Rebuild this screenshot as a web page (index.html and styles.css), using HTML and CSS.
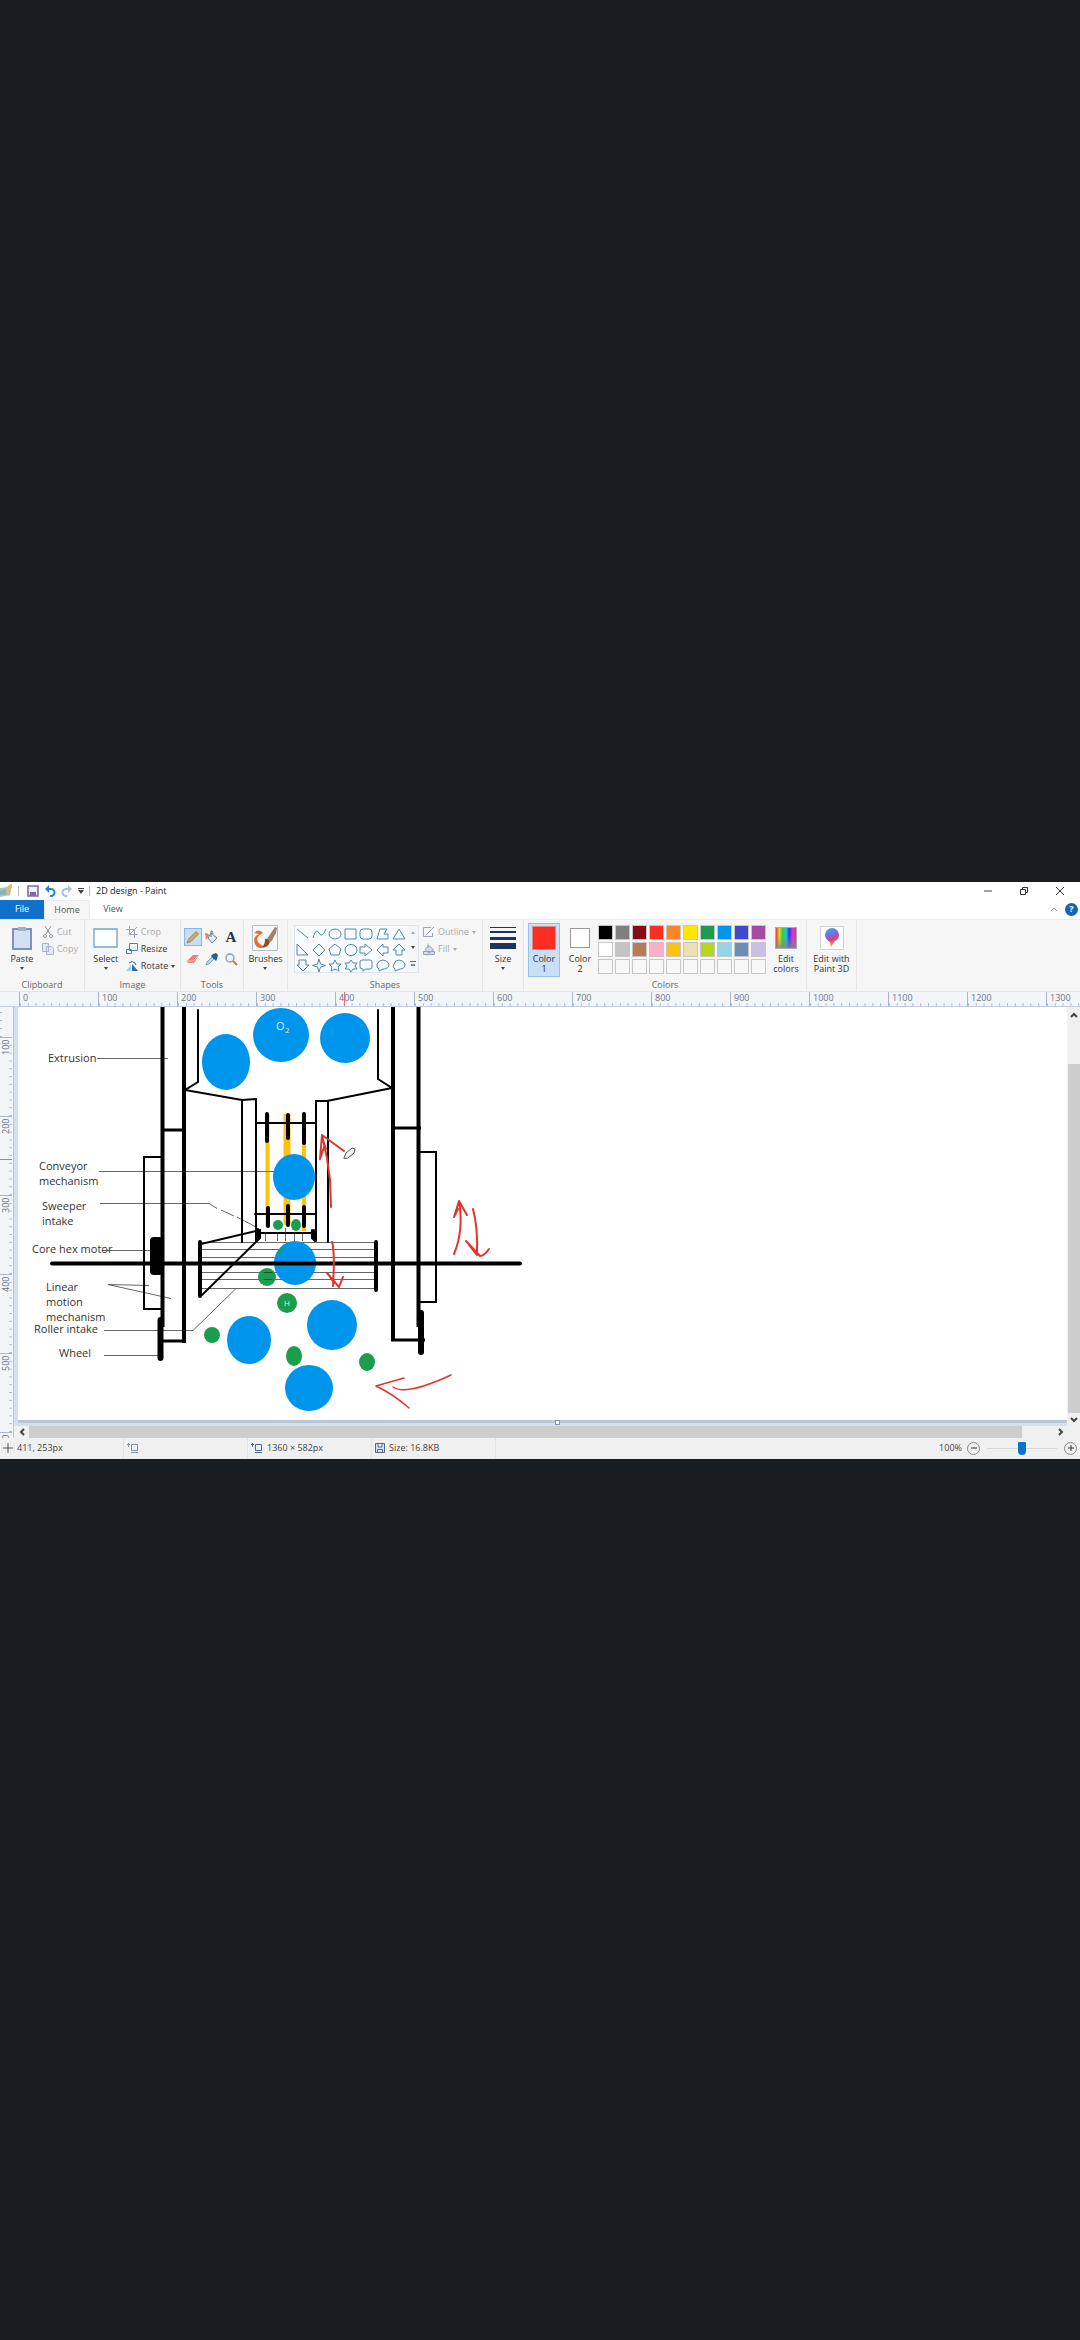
FILE: index.html
```html
<!DOCTYPE html>
<html lang="en">
<head>
<meta charset="utf-8">
<meta name="viewport" content="width=device-width, initial-scale=1">
<title>2D design - Paint</title>
<link rel="stylesheet" href="styles.css">
</head>
<body>
<main class="window">
  <header class="titlebar">
    <svg class="app-icon" width="12" height="14" viewBox="0 0 12 14"><path d="M0 4l7-1 4-3 1 1-2 10-10 2z" fill="#a8c8b4"/><path d="M7 3l4-3 1 1-3 11-3-2z" fill="#e0b878"/><path d="M0 7l6-2v5l-6 1z" fill="#79b7c6"/></svg>
    <span class="sep"></span>
    <button class="plain" aria-label="Save"><svg width="12" height="12" viewBox="0 0 12 12"><path d="M1 1h10v10H1z" fill="#f3eefa" stroke="#7d6aae" stroke-width="1.6"/><path d="M3 7h6v4H3z" fill="#7d6aae"/></svg></button>
    <button class="plain" aria-label="Undo"><svg width="12" height="12" viewBox="0 0 12 12" fill="none"><path d="M3 4h4a3.200 3.200 0 0 1 0 7H6" stroke="#2b83cf" stroke-width="2"/><path d="M1 4l4-4v8z" fill="#2b83cf"/></svg></button>
    <button class="plain" aria-label="Redo"><svg width="12" height="12" viewBox="0 0 12 12" fill="none"><path d="M9 4H5a3.200 3.200 0 0 0 0 7h1" stroke="#a8c0dd" stroke-width="2"/><path d="M11 4L7 0v8z" fill="#a8c0dd"/></svg></button>
    <button class="plain" aria-label="Customize toolbar"><svg width="6" height="6" viewBox="0 0 6 6"><path d="M0 0h6v1H0zM0 2h6L3 6z" fill="#444"/></svg></button>
    <span class="sep"></span>
    <h1 class="title">2D design - Paint</h1>
    <div class="window-buttons">
      <button class="plain" aria-label="Minimize"><svg width="10" height="10" viewBox="0 0 10 10"><path d="M1 5h8" stroke="#444"/></svg></button>
      <button class="plain" aria-label="Restore"><svg width="10" height="10" viewBox="0 0 10 10" fill="none" stroke="#333"><path d="M1.500 3.500h5v5h-5zM3.500 3V1.500h5v5H7"/></svg></button>
      <button class="plain" aria-label="Close"><svg width="10" height="10" viewBox="0 0 10 10" stroke="#333"><path d="M1 1l8 8M9 1L1 9"/></svg></button>
    </div>
  </header>

  <nav class="tabs">
    <button class="tab tab-file">File</button>
    <button class="tab tab-active">Home</button>
    <button class="tab">View</button>
    <div class="tabs-end">
      <button class="plain" aria-label="Collapse ribbon"><svg width="8" height="6" viewBox="0 0 8 6"><path d="M1 5l3-3 3 3" fill="none" stroke="#999"/></svg></button>
      <button class="help">?</button>
    </div>
  </nav>

  <section class="ribbon">
    <div class="group g-clipboard">
      <div class="group-body">
        <button class="big"><span class="glyph"><svg width="20" height="24" viewBox="0 0 20 24"><path d="M1 3h18v20H1z" fill="#d3dff2" stroke="#8292b4" stroke-width="2"/><path d="M6 1h8v4H6z" fill="#a4b0c8"/></svg></span>Paste<i class="caret"></i></button>
        <div class="stack">
          <button class="small off"><svg width="12" height="12" viewBox="0 0 12 12" fill="none" stroke="#8e93a4"><path d="M3 0l5 8M9 0L4 8"/><circle cx="3" cy="10" r="1.500"/><circle cx="9" cy="10" r="1.500"/></svg>Cut</button>
          <button class="small off"><svg width="12" height="12" viewBox="0 0 12 12" fill="#e4e8f4" stroke="#a9b2ce"><path d="M.5.500h6v8h-6zM4.500 3.500h5l2 2v6h-7z"/></svg>Copy</button>
        </div>
      </div>
      <h2>Clipboard</h2>
    </div>

    <div class="group g-image">
      <div class="group-body">
        <button class="big"><span class="glyph"><svg width="25" height="24" viewBox="0 0 25 24"><path d="M1 3h23v18H1z" fill="#fdfeff" stroke="#6fa5c8" stroke-width="1.300"/></svg></span>Select<i class="caret"></i></button>
        <div class="stack">
          <button class="small off"><svg width="12" height="12" viewBox="0 0 12 12" fill="none" stroke="#9c9fb8"><path d="M3.500 0v8.500H12M0 3.500h8.500V12M4 8l7-7"/></svg>Crop</button>
          <button class="small"><svg width="12" height="12" viewBox="0 0 12 12" fill="#eef6fc" stroke="#4388bb"><path d="M3.500.500h8v7h-8zM.5 6.500h5v4h-5z"/></svg>Resize</button>
          <button class="small"><svg width="12" height="12" viewBox="0 0 12 12"><path d="M0 11h5V5z" fill="#a7cde6"/><path d="M6 11h6L6 4z" fill="#286fa8"/><path d="M3 3q3-3 6 0l1 2" fill="none" stroke="#286fa8"/></svg>Rotate<i class="caret"></i></button>
        </div>
      </div>
      <h2>Image</h2>
    </div>

    <div class="group g-tools">
      <div class="group-body">
        <div class="tool-grid">
          <button class="tool on" aria-label="Pencil"><svg width="14" height="14" viewBox="0 0 14 14"><path d="M1 13l1.500-4L10 1.500l2.500 2.500L5 11.500z" fill="#d9a94f" stroke="#80765c" stroke-width=".7"/></svg></button>
          <button class="tool" aria-label="Fill"><svg width="14" height="14" viewBox="0 0 14 14"><path d="M6 3l6 5-5 5-4-5z" fill="#dce9f3" stroke="#64839c"/><path d="M6 7V1q2-1 2 3" fill="none" stroke="#64839c"/><path d="M0 3q4 0 4 3L1 10z" fill="#e5835e"/></svg></button>
          <button class="tool text-tool" aria-label="Text">A</button>
          <button class="tool" aria-label="Eraser"><svg width="14" height="14" viewBox="0 0 14 14"><path d="M1 9l6-6h6l-5 8H2z" fill="#e88079"/><path d="M1 9h6l6-6" stroke="#f7c5bf" fill="none"/></svg></button>
          <button class="tool" aria-label="Color picker"><svg width="14" height="14" viewBox="0 0 14 14"><path d="M1 13l1-3 5-5 2 2-5 5z" fill="#b7d5ea" stroke="#5e87a5" stroke-width=".7"/><path d="M6 4l5 5 1-2 1-4-2-2-3 1z" fill="#225f93"/></svg></button>
          <button class="tool" aria-label="Magnifier"><svg width="14" height="14" viewBox="0 0 14 14"><circle cx="6" cy="6" r="4" fill="#e9f3fa" stroke="#8c99a6" stroke-width="1.300"/><path d="M9 9l4 4" stroke="#b98148" stroke-width="2"/></svg></button>
        </div>
      </div>
      <h2>Tools</h2>
    </div>

    <div class="group g-brushes">
      <div class="group-body">
        <button class="big"><span class="glyph"><svg width="26" height="26" viewBox="0 0 26 26"><path d="M.5.500h25v25H.5z" fill="#f6f8fa" stroke="#b4bfc8"/><path d="M2 8q5-5 9 0-8 4-5 9t10 4q-10 5-13-2-3-7 4-10z" fill="#ed6a2e"/><path d="M13 14q4-1 5 3-2 6-8 5 3-2 3-8z" fill="#8c4d22"/><path d="M15 14L23 2l2 1-1 5-5 9z" fill="#a0826a"/></svg></span>Brushes<i class="caret"></i></button>
      </div>
    </div>

    <div class="group g-shapes">
      <div class="group-body">
        <div class="shape-box">
          <svg class="shapes" width="112" height="46" viewBox="0 0 112 46" fill="none" stroke="#4f87b4">
            <path d="M2 3l11 9M18 12q3-11 6-5t7-4"/><ellipse cx="40" cy="8" rx="6" ry="5"/><path d="M50 3h11v10H50z"/><rect x="65" y="3" width="12" height="10" rx="3"/><path d="M82 13l3-10h7l-3 5h4v5zM98 13l6-10 6 10z"/>
            <path d="M2 18v11h11zM24 18l6 6-6 6-6-6zM40 18l6 5-2 6h-8l-2-6z"/><ellipse cx="56" cy="24" rx="6" ry="5.500"/><path d="M65 21h5v-3l7 6-7 6v-3h-5zM93 21h-5v-3l-6 6 6 6v-3h5zM98 24l6-6 6 6h-3v5h-6v-5z"/>
            <path d="M4 34h7v5h3l-6 6-6-6h2zM24 33l1.500 5 5 1.500-5 1.500-1.500 5-1.500-5-5-1.500 5-1.500zM40 34l2 4h4l-3 3 1 4-4-2-4 2 1-4-3-3h4zM56 34l2 3h4l-2 3 2 3h-4l-2 3-2-3h-4l2-3-2-3h4z"/><path d="M67 34h8q2 0 2 2v5q0 2-2 2h-4l-3 2v-2q-3 0-3-2v-5q0-2 2-2zM84 43q-3-1-2-5 2-4 6-4t6 4q0 5-6 5l-4 2zM100 43q-3-2-1-5 1-4 5-4t6 4q0 5-5 5l-5 2z"/>
          </svg>
          <span class="shape-scroll"><i class="up"></i><i class="caret"></i><i class="more"></i></span>
        </div>
        <div class="stack">
          <button class="small off"><svg width="12" height="12" viewBox="0 0 12 12" fill="none" stroke="#9ca5b4"><path d="M8 1.500H.500v9h9V7M3 9l8-8"/></svg>Outline<i class="caret"></i></button>
          <button class="small off"><svg width="12" height="12" viewBox="0 0 12 12" fill="#d8dde8" stroke="#97a0b5"><path d="M.5 8.500h11v3H.5zM6 2.500L10.500 7 6 10 2 6.500zM5 5V.500"/></svg>Fill<i class="caret"></i></button>
        </div>
      </div>
      <h2>Shapes</h2>
    </div>

    <div class="group g-size">
      <div class="group-body">
        <button class="big"><span class="glyph"><svg width="26" height="24" viewBox="0 0 26 24" fill="#1c3558"><path d="M0 1h26v1H0zM0 5h26v2H0zM0 11h26v3H0zM0 17h26v6H0z"/></svg></span>Size<i class="caret"></i></button>
      </div>
    </div>

    <div class="group g-colors">
      <div class="group-body">
        <button class="big color-pick on"><span class="glyph"><i class="swatch-lg red"></i></span>Color<br>1</button>
        <button class="big color-pick"><span class="glyph"><i class="swatch-lg white"></i></span>Color<br>2</button>
        <div class="palette">
          <button class="c-black" aria-label="Black"></button><button class="c-gray" aria-label="Gray"></button><button class="c-maroon" aria-label="Dark red"></button><button class="c-red" aria-label="Red"></button><button class="c-orange" aria-label="Orange"></button><button class="c-yellow" aria-label="Yellow"></button><button class="c-green" aria-label="Green"></button><button class="c-blue" aria-label="Turquoise"></button><button class="c-indigo" aria-label="Indigo"></button><button class="c-purple" aria-label="Purple"></button>
          <button class="c-white" aria-label="White"></button><button class="c-silver" aria-label="Light gray"></button><button class="c-brown" aria-label="Brown"></button><button class="c-rose" aria-label="Rose"></button><button class="c-gold" aria-label="Gold"></button><button class="c-cream" aria-label="Light yellow"></button><button class="c-lime" aria-label="Lime"></button><button class="c-sky" aria-label="Light turquoise"></button><button class="c-slate" aria-label="Blue-gray"></button><button class="c-lavender" aria-label="Lavender"></button>
          <button aria-label="Custom 1"></button><button aria-label="Custom 2"></button><button aria-label="Custom 3"></button><button aria-label="Custom 4"></button><button aria-label="Custom 5"></button><button aria-label="Custom 6"></button><button aria-label="Custom 7"></button><button aria-label="Custom 8"></button><button aria-label="Custom 9"></button><button aria-label="Custom 10"></button>
        </div>
        <button class="big"><span class="glyph"><i class="spectrum"></i></span>Edit<br>colors</button>
      </div>
      <h2>Colors</h2>
    </div>

    <div class="group g-3d">
      <div class="group-body">
        <button class="big"><span class="glyph"><svg width="24" height="24" viewBox="0 0 24 24"><defs><linearGradient id="drop" x1="0" y1="0" x2="0.300" y2="1"><stop offset="0" stop-color="#2fb4ee"/><stop offset=".45" stop-color="#7a6ce0"/><stop offset=".7" stop-color="#e23f7c"/><stop offset="1" stop-color="#f7a13c"/></linearGradient></defs><path d="M.5.500h23v23H.5z" fill="#fff" stroke="#d0d3d8"/><path d="M12 2a7 7 0 0 1 7 7q0 4-4 6l-4 6-1-5Q5 13 5 9a7 7 0 0 1 7-7z" fill="url(#drop)"/></svg></span>Edit with<br>Paint 3D</button>
      </div>
    </div>
  </section>

  <section class="workspace">
    <div class="ruler-h"><span>0</span><span>100</span><span>200</span><span>300</span><span class="marked">400</span><span>500</span><span>600</span><span>700</span><span>800</span><span>900</span><span>1000</span><span>1100</span><span>1200</span><span>1300</span></div>
    <div class="ruler-v"><span></span><span>100</span><span class="marked">200</span><span>300</span><span>400</span><span>500</span><span>600</span></div>
    <div class="canvas">
      <svg width="560" height="413" viewBox="18 1006 560 413" fill="none" stroke="#000" stroke-linecap="round" role="img" aria-label="Robot intake diagram">
        <g stroke="#ffc20e" stroke-width="4" stroke-linecap="butt"><path d="M267.500 1113v113M304 1113v117"/><path d="M287 1113v111" stroke-width="7"/></g>
        <g stroke="#666" stroke-linecap="butt">
          <path d="M200 1241.500h176M200 1248.500h176M200 1256.500h176M200 1271.500h176M200 1278.500h176M200 1287.500h176"/>
          <path d="M97 1057.500h71M99 1170.500h180M100 1202.500h109l8 5M221 1209l13 6M237 1216l19 10M102 1249.500h48M149 1284.500l-41-1 63 14M104 1329.500h89l43-42M104 1354.500h54M265.500 1232v8M277.500 1232v8M285.500 1227v13M294.500 1232v8M302.500 1232v8"/>
        </g>
        <g fill="#0095ec" stroke="none">
          <ellipse cx="226" cy="1061" rx="24" ry="28"/><ellipse cx="281" cy="1034" rx="28" ry="27"/><circle cx="345" cy="1037" r="25"/><ellipse cx="294" cy="1176" rx="21" ry="23"/><ellipse cx="295" cy="1262" rx="21" ry="22"/><ellipse cx="249" cy="1339" rx="22" ry="24"/><circle cx="332" cy="1324" r="25"/><ellipse cx="309" cy="1387" rx="24" ry="23"/>
        </g>
        <g fill="#1a9e4b" stroke="none">
          <circle cx="278" cy="1224" r="5"/><ellipse cx="296" cy="1224" rx="5" ry="6"/><circle cx="267" cy="1276" r="9"/><circle cx="287" cy="1302" r="10"/><circle cx="212" cy="1334" r="8"/><ellipse cx="294" cy="1355" rx="8" ry="10"/><ellipse cx="367" cy="1361" rx="8" ry="9"/><path d="M277 1253l4-6 3-1-4 7z"/>
        </g>
        <path d="M264 1271.500h8M264 1278.500h8" stroke="#14532b"/>
        <g stroke-width="4" stroke-linecap="butt">
          <path d="M162.500 1006v320M184 1006v336M393 1006v334M418.500 1006v320"/>
          <path d="M162 1129h22M391 1127h30M162 1340h22M391 1339h34" stroke-width="3"/>
          <path d="M52 1262.500h468" stroke-linecap="round"/>
          <path d="M267 1113v27M288 1114v23M304 1113v29M268 1207v18M288 1205v19M304 1206v19M200 1241v54M376 1241v48" stroke-linecap="round"/>
          <path d="M160.500 1319v38M421 1312v39" stroke-width="6" stroke-linecap="round"/>
        </g>
        <g stroke-width="2">
          <path d="M198 1009v72l-13 8 57 10 14-1v142M242 1099v142M378 1009v69l14 9-65 13h-11v140M328 1100v141"/>
          <path d="M162 1156h-18v152h18M420 1151h16v150h-18M256 1122h60M255 1213h61M256 1232h60"/>
          <path d="M201 1243l59-14v8l-58 57M258 1228v10M312 1229v8l3 3M314 1229v9"/>
        </g>
        <rect x="150" y="1236" width="13" height="38" rx="4" fill="#000" stroke="none"/>
        <g stroke="#e0342c" stroke-width="2" stroke-linejoin="round">
          <path d="M331 1206l-1-27-3-22-5-23-2 24 4-12M322 1134l22 16M322 1136l4 12"/>
          <path d="M332 1241q3 8 1 44M327 1272l12 14 4-10M329 1274l5 8"/>
          <path d="M454 1253q10-24 5-53l-5 16 4-8M459 1200l8 14"/>
          <path d="M473 1208q5 18 4 46M466 1240l14 15q4 0 9-7M469 1244l8 10"/>
          <path d="M393 1386q13 9 58-12M404 1377l-28 8q17 8 33 22" stroke-width="1.500"/>
        </g>
        <path d="M344 1157l2-5 6-5 3 1-1 4-6 5z" fill="#f4f4f4" stroke="#555"/>
        <g class="labels">
          <text x="48" y="1061">Extrusion</text>
          <text x="39" y="1169">Conveyor</text><text x="39" y="1184">mechanism</text>
          <text x="42" y="1209">Sweeper</text><text x="42" y="1224">intake</text>
          <text x="32" y="1252">Core hex motor</text>
          <text x="46" y="1290">Linear</text><text x="46" y="1305">motion</text><text x="46" y="1320">mechanism</text>
          <text x="34" y="1332">Roller intake</text>
          <text x="59" y="1356">Wheel</text>
        </g>
        <g class="marks"><text x="276" y="1029">O</text><text class="sub" x="285" y="1032">2</text><text class="sub" x="284" y="1305">H</text></g>
      </svg>
    </div>
    <div class="scroll-v"><svg width="8" height="6" viewBox="0 0 8 6"><path d="M1 5l3-3 3 3" fill="none" stroke="#444" stroke-width="2"/></svg><i class="thumb"></i><svg width="8" height="6" viewBox="0 0 8 6"><path d="M1 1l3 3 3-3" fill="none" stroke="#444" stroke-width="2"/></svg></div>
    <div class="canvas-edge"><i></i></div>
    <div class="scroll-h"><svg width="6" height="8" viewBox="0 0 6 8"><path d="M5 1L2 4l3 3" fill="none" stroke="#444" stroke-width="2"/></svg><i class="thumb"></i><svg width="6" height="8" viewBox="0 0 6 8"><path d="M1 1l3 3-3 3" fill="none" stroke="#444" stroke-width="2"/></svg></div>
  </section>

  <footer class="status">
    <span class="cell"><svg width="10" height="10" viewBox="0 0 10 10"><path d="M5 0v10M0 5h10" stroke="#555"/></svg>411, 253px</span>
    <span class="cell"><svg width="12" height="10" viewBox="0 0 12 10" fill="none" stroke="#8294a9"><path d="M0 1.500h3M1.500 0v4M4.500 1.500h6v6h-6zM4 9.500h7"/></svg></span>
    <span class="cell"><svg width="12" height="10" viewBox="0 0 12 10" fill="none" stroke="#4d6a8c"><path d="M0 1.500h3M1.500 0v4M4.500 1.500h6v6h-6zM4 9.500h7"/></svg>1360 × 582px</span>
    <span class="cell"><svg width="10" height="10" viewBox="0 0 10 10" fill="#dbe6f2" stroke="#4d6a8c"><path d="M.5.500h9v9h-9zM3 1v3h4V1M2.500 9V6.500h5V9"/></svg>Size: 16.8KB</span>
    <div class="zoom">
      <label for="zoom">100%</label>
      <button class="round" aria-label="Zoom out"><svg width="6" height="6" viewBox="0 0 6 6"><path d="M0 3h6" stroke="#333"/></svg></button>
      <input id="zoom" type="range" min="0" max="100" value="50">
      <button class="round" aria-label="Zoom in"><svg width="6" height="6" viewBox="0 0 6 6"><path d="M0 3h6M3 0v6" stroke="#333"/></svg></button>
    </div>
  </footer>
</main>
</body>
</html>
```
FILE: styles.css
```css
* { box-sizing: border-box; }

body {
  margin: 0;
  min-height: 100vh;
  display: flex;
  flex-direction: column;
  justify-content: center;
  background: #191d20;
  color: #333;
  font-family: "Open Sans", "Noto Sans", sans-serif;
  font-size: 9px;
  line-height: 10px;
}

button {
  margin: 0;
  padding: 0;
  border: 0;
  background: none;
  color: inherit;
  font: inherit;
}

svg { display: block; flex: none; }

.window { width: 100%; background: #fff; overflow: hidden; }

/* Title bar */
.titlebar { display: flex; align-items: center; height: 18px; gap: 5px; }
.titlebar .sep { width: 1px; height: 10px; background: #bbb; }
.titlebar .app-icon + .sep { margin: 0 3px 0 1px; }
.title { margin: 0 0 0 1px; font-size: 9px; font-weight: 400; color: #222; }
.window-buttons { display: flex; gap: 26px; margin-left: auto; padding-right: 15px; }

/* Tabs */
.tabs { display: flex; height: 19px; }
.tab { width: 46px; color: #555; }
.tab-file { width: 44px; background: #1170cc; color: #fff; }
.tab-active { background: #f6f6f6; border: 1px solid #ebebeb; border-bottom: 0; }
.tabs-end { display: flex; align-items: center; gap: 7px; margin-left: auto; padding-right: 2px; }
.help { width: 13px; height: 13px; border-radius: 50%; background: #0f66b8; color: #fff; font-weight: 700; }

/* Ribbon */
.ribbon { display: flex; height: 72px; background: #f6f6f6; border-top: 1px solid #ebebeb; }
.group {
  display: flex;
  flex-direction: column;
  justify-content: space-between;
  flex: none;
  padding: 3px 4px 1px;
  border-right: 1px solid #e6e6e6;
}
.group h2 { margin: 0; font-size: 9px; font-weight: 400; text-align: center; color: #666; }
.group-body { display: flex; justify-content: center; gap: 4px; }
.g-clipboard { width: 85px; }
.g-image { width: 96px; }
.g-tools { width: 63px; }
.g-brushes { width: 44px; }
.g-shapes { width: 195px; }
.g-size { width: 41px; }
.g-colors { width: 283px; }
.g-3d { width: 50px; }

.big { display: flex; flex-direction: column; align-items: center; flex: none; min-width: 32px; line-height: 10px; white-space: nowrap; }
.big .glyph { display: flex; align-items: center; justify-content: center; height: 26px; margin: 2px 0 3px; }
.caret { width: 0; height: 0; border: 2px solid transparent; border-top: 3px solid #444; border-bottom: 0; }
.big .caret { margin-top: 3px; }
.stack { display: flex; flex-direction: column; padding-top: 1px; }
.small { display: flex; align-items: center; gap: 3px; height: 17px; white-space: nowrap; }
.off { color: #aaa; }
.off .caret { border-top-color: #aaa; }

.tool-grid { display: grid; grid-template-columns: repeat(3, 18px); gap: 4px 1px; padding-top: 5px; }
.tool { display: flex; align-items: center; justify-content: center; height: 18px; }
.tool.on { background: #c6dff6; border: 1px solid #8ab8e4; }
.text-tool { font-family: "Liberation Serif", serif; font-size: 15px; font-weight: 700; color: #23354d; }

.shape-box { display: flex; height: 48px; margin-top: 2px; border: 1px solid #dfe5ea; background: #f8fcff; }
.shape-scroll { display: flex; flex-direction: column; justify-content: space-around; align-items: center; width: 11px; background: #f4f6f8; }
.up { border: 2px solid transparent; border-bottom: 3px solid #aaa; border-top: 0; }
.more { width: 6px; height: 5px; border-top: 1px solid #666; background: linear-gradient(#888, #888) center 2px / 4px 2px no-repeat; }

.color-pick { height: 54px; border: 1px solid transparent; }
.color-pick .glyph { margin-top: 1px; }
.color-pick.on { background: #c9dff5; border-color: #97c0e8; }
.swatch-lg { width: 20px; height: 20px; border: 1px solid #999; }
.swatch-lg.red { width: 24px; height: 24px; background: #fb2c20; border-color: #d98a8a; }
.swatch-lg.white { background: #fff; }
.palette { display: grid; grid-template-columns: repeat(10, 1fr); grid-auto-rows: 15px; gap: 2px; width: 173px; height: 50px; margin: 2px 0 0 -2px; }
.palette button { border: 1px solid #c6c6c6; background: #f8f8f8; }
.spectrum {
  width: 22px; height: 22px; border: 1px solid #aaa;
  background: linear-gradient(transparent 40%, #888c), linear-gradient(90deg, #e33, #dd2, #3c3, #2cc, #33e, #d3d, #e36);
}
.palette .c-black { background: #000; } .palette .c-gray { background: #7f7f7f; }
.palette .c-maroon { background: #880a17; } .palette .c-red { background: #f92f24; }
.palette .c-orange { background: #ff8424; } .palette .c-yellow { background: #ffe800; }
.palette .c-green { background: #1a9e4b; } .palette .c-blue { background: #0095ec; }
.palette .c-indigo { background: #4048cc; } .palette .c-purple { background: #a24ca2; }
.palette .c-white { background: #fff; } .palette .c-silver { background: #c3c3c3; }
.palette .c-brown { background: #b87a58; } .palette .c-rose { background: #ffaec9; }
.palette .c-gold { background: #ffc20a; } .palette .c-cream { background: #ece0ae; }
.palette .c-lime { background: #b4d61c; } .palette .c-sky { background: #93d5e6; }
.palette .c-slate { background: #6c8db8; } .palette .c-lavender { background: #c8c0e2; }

/* Rulers, canvas and scroll bars */
.workspace {
  display: grid;
  grid-template-columns: 14px minmax(0, 1fr) 13px;
  grid-template-rows: 16px auto 6px 12px;
}
.ruler-h {
  grid-column: 1 / -1;
  display: flex;
  overflow: hidden;
  padding-left: 19px;
  border-top: 1px solid #e2e6ec;
  border-bottom: 1px solid #c3ccdc;
  background: #f2f6fb;
  color: #6a7488;
}
.ruler-h span {
  position: relative;
  flex: none;
  width: 79px;
  padding: 1px 3px;
  border-left: 1px solid #a9b5c8;
  background: linear-gradient(90deg, #b3bdce 1px, transparent 1px) 0 bottom / 10% 3px repeat-x;
}
/* The ruler is clipped to the canvas height and never stretches it */
.ruler-v {
  grid-row: 2 / 5;
  height: 0;
  min-height: 100%;
  overflow: hidden;
  border-right: 1px solid #b9c5d9;
  background: #f2f5fa;
  color: #6a7488;
}
.ruler-v span {
  position: relative;
  display: block;
  height: 79px;
  padding: 2px 1px;
  border-bottom: 1px solid #a9b5c8;
  background: linear-gradient(#b3bdce 1px, transparent 1px) left 0 / 3px 10% repeat-y;
  writing-mode: vertical-rl;
  transform: rotate(180deg);
  text-align: right;
}
.ruler-v span:first-child { height: 30px; background-size: 3px 8px; border-bottom: 0; }
/* Pointer position shown on both rulers */
.marked::after { content: ""; position: absolute; background: #e26b78; }
.ruler-h .marked::after { left: 8px; top: 0; width: 1px; height: 15px; }
.ruler-v .marked::after { left: 0; bottom: 42px; width: 14px; height: 1px; }

.canvas { border-left: 4px solid #d5dfee; background: #fff; overflow: hidden; }
.labels text { font-size: 11px; fill: #333; stroke: none; }
.marks text { font-size: 11px; fill: #d8efff; stroke: none; }
.marks .sub { font-size: 8px; }

.scroll-v { grid-row: 2 / 4; grid-column: 3; display: flex; flex-direction: column; align-items: center; padding: 5px 0 3px; background: #f0f0f0; }
.scroll-v .thumb { flex: 1; width: 12px; margin: 46px 0 4px; background: #cdcdcd; }
.canvas-edge { grid-column: 2; border-left: 4px solid #d5dfee; background: linear-gradient(#b9c6d8 50%, #d5dfee 50%); display: flex; justify-content: center; }
.canvas-edge i { width: 5px; height: 5px; margin-left: 30px; border: 1px solid #8894a8; background: #fff; }
.scroll-h { grid-column: 2 / 4; display: flex; align-items: center; padding: 0 16px 0 5px; background: #f0f0f0; }
.scroll-h .thumb { flex: 1; height: 12px; margin: 0 36px 0 4px; background: #cdcdcd; }

/* Status bar */
.status { display: flex; height: 21px; background: #f0f0f0; color: #444; }
.cell { display: flex; align-items: center; gap: 4px; width: 124px; padding-left: 3px; border-right: 1px solid #e2e2e2; }
.zoom { display: flex; align-items: center; gap: 5px; margin-left: auto; padding-right: 3px; }
.round { display: flex; align-items: center; justify-content: center; width: 13px; height: 13px; border: 1px solid #888; border-radius: 50%; }
#zoom { width: 70px; height: 14px; margin: 0 2px; appearance: none; background: linear-gradient(#d6d6d6, #d6d6d6) center / 100% 1px no-repeat; }
#zoom::-webkit-slider-thumb { appearance: none; width: 8px; height: 13px; background: #0b72d0; border-radius: 1px 1px 4px 4px; }
```
